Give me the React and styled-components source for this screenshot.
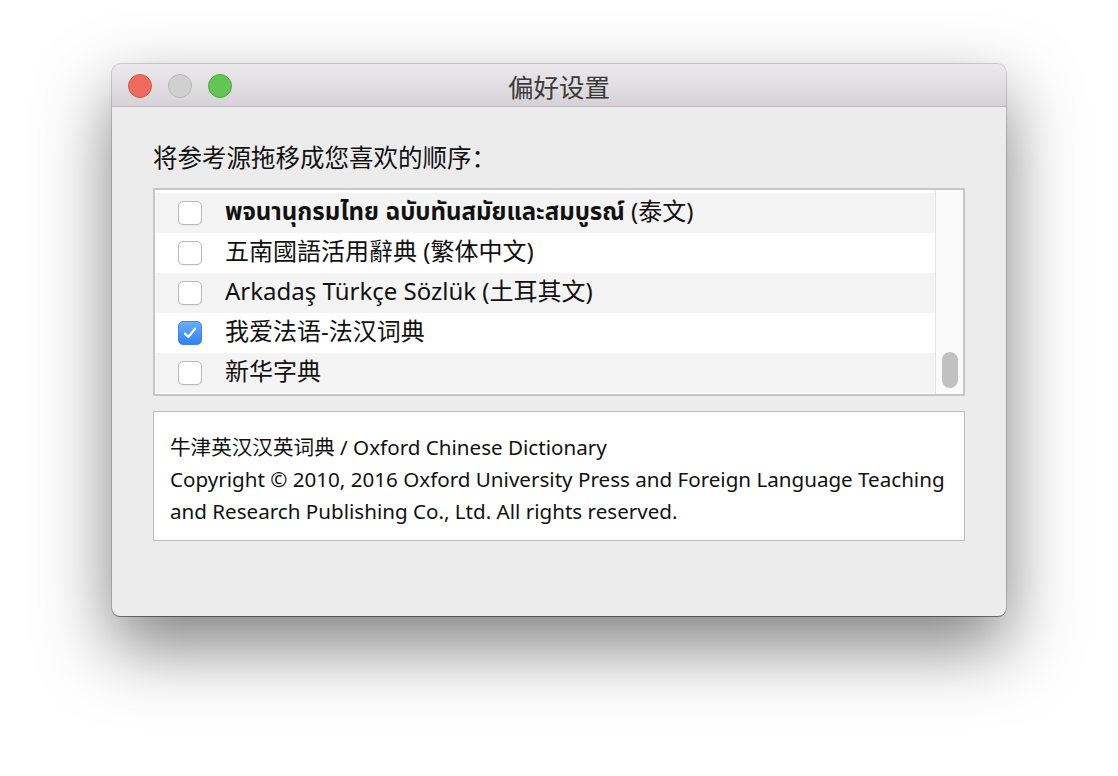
import React from "react";
import styled, { createGlobalStyle } from "styled-components";

const Global = createGlobalStyle`
  html, body { margin: 0; padding: 0; background: #ffffff; }
  body { font-family: "Noto Sans", "Noto Sans CJK SC", sans-serif; }
`;

const Page = styled.div`
  width: 1118px;
  height: 776px;
  padding: 64px 0 0 112px;
  box-sizing: border-box;
`;

const Window = styled.div`
  width: 894px;
  height: 552px;
  background: #ececec;
  border-radius: 9px 9px 8px 8px;
  box-shadow: 0 0 0 1px rgba(0, 0, 0, 0.16), 0 1px 0 rgba(0, 0, 0, 0.35),
    0 30px 70px rgba(0, 0, 0, 0.5);
  display: flex;
  flex-direction: column;
  overflow: hidden;
`;

const TitleBar = styled.div`
  height: 42px;
  flex: 0 0 42px;
  background: linear-gradient(#ebe9eb, #d5d3d5);
  border-bottom: 1px solid #b9b7b9;
  display: grid;
  grid-template-columns: 1fr auto 1fr;
  align-items: center;
`;

const Lights = styled.div`
  display: flex;
  gap: 16px;
  padding-left: 16px;
  padding-top: 2px;
`;

const Light = styled.span`
  width: 24px;
  height: 24px;
  border-radius: 50%;
  box-sizing: border-box;
  background: ${(p) => p.$bg};
  border: 1px solid ${(p) => p.$bd};
`;

const Title = styled.div`
  font-family: "Noto Sans CJK SC", sans-serif;
  font-size: 25.5px;
  color: #3a3a3a;
`;

const Content = styled.div`
  padding: 35px 41px 0 41px;
  display: flex;
  flex-direction: column;
`;

const Label = styled.div`
  font-family: "Noto Sans CJK SC", sans-serif;
  font-size: 24.5px;
  line-height: 30px;
  color: #111;
  margin-bottom: 16px;
`;

const ListBox = styled.div`
  height: 208px;
  box-sizing: border-box;
  border: 2px solid #c6c6c6;
  background: #ffffff;
  display: flex;
  overflow: hidden;
`;

const Rows = styled.div`
  flex: 1;
  padding-top: 3px;
  display: flex;
  flex-direction: column;
`;

const Row = styled.div`
  height: 40px;
  flex: 0 0 40px;
  display: flex;
  align-items: center;
  padding-left: 23px;
  gap: 23px;
  background: ${(p) => (p.$alt ? "#f4f4f4" : "#ffffff")};
`;

const Box = styled.span`
  width: 24px;
  height: 24px;
  box-sizing: border-box;
  border-radius: 5px;
  border: 1px solid ${(p) => (p.$on ? "#3f86ea" : "#b9b9b9")};
  background: ${(p) => (p.$on ? "linear-gradient(#6aaefa, #2f82f2)" : "#ffffff")};
  display: flex;
  align-items: center;
  justify-content: center;
  box-shadow: 0 1px 1px rgba(0, 0, 0, 0.06);
`;

const RowText = styled.span`
  font-family: "Noto Sans", "Noto Sans CJK SC", "Noto Sans Thai", sans-serif;
  font-size: 24px;
  line-height: 30px;
  padding-bottom: 4px;
  color: #111;
  white-space: nowrap;
`;

const Thai = styled.span`
  font-weight: 700;
`;

const ScrollBar = styled.div`
  width: 28px;
  flex: 0 0 28px;
  background: #fafafa;
  border-left: 1px solid #e4e4e4;
  display: flex;
  flex-direction: column;
  justify-content: flex-end;
  align-items: center;
  padding-bottom: 6px;
  box-sizing: border-box;
`;

const Thumb = styled.div`
  width: 16px;
  height: 36px;
  border-radius: 8px;
  background: #c1c1c1;
`;

const InfoBox = styled.div`
  margin-top: 15px;
  height: 130px;
  box-sizing: border-box;
  border: 1px solid #bdbdbd;
  background: #ffffff;
  padding: 19px 16px 0 16px;
  font-family: "Noto Sans", "Noto Sans CJK SC", sans-serif;
  font-size: 20.6px;
  line-height: 32px;
  color: #111;
`;

const Line = styled.div`
  white-space: nowrap;
`;

const Check = () => (
  <svg width="16" height="16" viewBox="0 0 16 16">
    <path d="M3 8.6 L6.4 12 L13 3.6" fill="none" stroke="#fff" strokeWidth="2.2" strokeLinecap="round" strokeLinejoin="round" />
  </svg>
);

const items = [
  { thai: "พจนานุกรมไทย ฉบับทันสมัยและสมบูรณ์", text: " (泰文)" },
  { text: "五南國語活用辭典 (繁体中文)" },
  { text: "Arkadaş Türkçe Sözlük (土耳其文)" },
  { text: "我爱法语-法汉词典", on: true },
  { text: "新华字典" },
];

export default function App() {
  return (
    <Page>
      <Global />
      <Window>
        <TitleBar>
          <Lights>
            <Light $bg="#ee6a5f" $bd="#d5574d" />
            <Light $bg="#d0d0d0" $bd="#b8b8b8" />
            <Light $bg="#62c554" $bd="#50a946" />
          </Lights>
          <Title>偏好设置</Title>
          <div />
        </TitleBar>
        <Content>
          <Label>将参考源拖移成您喜欢的顺序：</Label>
          <ListBox>
            <Rows>
              {items.map((it, i) => (
                <Row key={i} $alt={i % 2 === 0}>
                  <Box $on={it.on}>{it.on && <Check />}</Box>
                  <RowText>
                    {it.thai && <Thai>{it.thai}</Thai>}
                    {it.text}
                  </RowText>
                </Row>
              ))}
            </Rows>
            <ScrollBar>
              <Thumb />
            </ScrollBar>
          </ListBox>
          <InfoBox>
            <Line>牛津英汉汉英词典 / Oxford Chinese Dictionary</Line>
            <Line>Copyright © 2010, 2016 Oxford University Press and Foreign Language Teaching</Line>
            <Line>and Research Publishing Co., Ltd. All rights reserved.</Line>
          </InfoBox>
        </Content>
      </Window>
    </Page>
  );
}
